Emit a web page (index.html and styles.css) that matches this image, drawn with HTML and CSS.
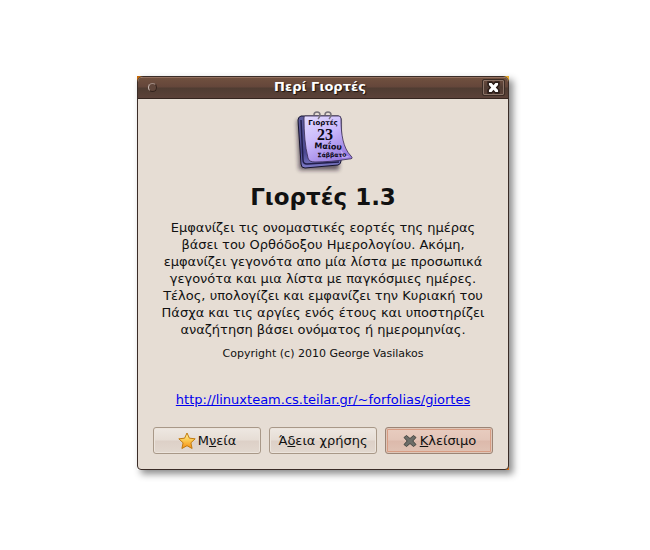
FILE: index.html
```html
<!DOCTYPE html>
<html lang="el">
<head>
<meta charset="utf-8">
<meta name="viewport" content="width=device-width, initial-scale=1">
<title>Περί Γιορτές</title>
<link rel="stylesheet" href="styles.css">
</head>
<body>
<main class="frame">
  <section class="window" role="dialog" aria-labelledby="window-title">
    <header class="titlebar">
      <button class="menu-dot" type="button" aria-label="Μενού"></button>
      <h1 class="window-title" id="window-title">Περί Γιορτές</h1>
      <button class="window-close" type="button" aria-label="Κλείσιμο παραθύρου">
        <svg width="13" height="13" viewBox="1 1 10 10" aria-hidden="true">
          <path d="M2 2h2.500L6 3.700 7.500 2H10v2L8.200 6 10 8v2H7.500L6 8.300 4.500 10H2V8l1.800-2L2 4z" fill="none" stroke="#2b1d18" stroke-width="1.500"/>
          <path d="M2.500 2.500H4.500L6 4.200 7.500 2.500H9.500v1.500L7.700 6 9.500 8v1.500H7.500L6 7.800 4.500 9.500H2.500V8l1.800-2L2.500 4z" fill="#fff"/>
        </svg>
      </button>
    </header>
    <div class="content">
      <svg class="logo" width="64" height="68" viewBox="0 0 64 68" role="img" aria-label="Ημερολόγιο">
        <defs>
          <linearGradient id="page" x1="0" y1="0" x2="0.6" y2="1">
            <stop offset="0" stop-color="#e4dcff"/>
            <stop offset="0.5" stop-color="#c9b8fb"/>
            <stop offset="1" stop-color="#9a7ee0"/>
          </linearGradient>
          <linearGradient id="block" x1="0" y1="0" x2="0" y2="1">
            <stop offset="0" stop-color="#5e5c9c"/>
            <stop offset="0.7" stop-color="#4a4790"/>
            <stop offset="1" stop-color="#7f7cc8"/>
          </linearGradient>
          <filter id="soft" x="-30%" y="-30%" width="160%" height="160%">
            <feGaussianBlur stdDeviation="2"/>
          </filter>
        </defs>
        <path d="M6 12h42v50H8z" fill="#20182c" opacity=".65" filter="url(#soft)"/>
        <path d="M7 12q0-3 3-4h37q3 0 3 3v42q0 3-3 4l-33 3q-4 0-4-4z" fill="url(#block)" stroke="#17152f"/>
        <path d="M10 12l2 40q0 4 4 4l32-2" fill="none" stroke="#211e4b" stroke-width="1.500"/>
        <path d="M14 8h34q2 0 2 3c0 15 2 29 10 37q3 3-2 3c-12 2-24 3-34 3q-6 0-7-4C14 38 13 25 13 10q0-2 1-2z" fill="url(#page)" stroke="#35284f" stroke-width=".8"/>
        <path d="M49 40q3 7 10 9-4 1-8 1z" fill="#d5c5ff" opacity=".6"/>
        <g fill="none" stroke="#77727a" stroke-width="1.500">
          <path d="M23 7q0-3 3-3 3 0 3 3 0 2-2 4"/>
          <path d="M34 7q0-3 3-3 3 0 3 3 0 2-2 4"/>
        </g>
        <g text-anchor="middle" fill="#090713" font-family="DejaVu Sans, sans-serif" font-weight="700">
          <text x="32" y="17" font-size="7">Γιορτές</text>
          <text x="34" y="32" font-size="16" font-family="Liberation Serif, serif">23</text>
          <text x="37" y="41" font-size="8" transform="rotate(3 37 41)">Μαΐου</text>
          <text x="41" y="49" font-size="6" transform="rotate(-1 41 49)">Σάββατο</text>
        </g>
      </svg>
      <h2 class="app-name">Γιορτές 1.3</h2>
      <p class="description">Εμφανίζει τις ονομαστικές εορτές της ημέρας βάσει του Ορθόδοξου Ημερολογίου. Ακόμη, εμφανίζει γεγονότα απο μία λίστα με προσωπικά γεγονότα και μια λίστα με παγκόσμιες ημέρες. Τέλος, υπολογίζει και εμφανίζει την Κυριακή του Πάσχα και τις αργίες ενός έτους και υποστηρίζει αναζήτηση βάσει ονόματος ή ημερομηνίας.</p>
      <p class="copyright">Copyright (c) 2010 George Vasilakos</p>
      <a class="website" href="http://linuxteam.cs.teilar.gr/~forfolias/giortes">http://linuxteam.cs.teilar.gr/~forfolias/giortes</a>
    </div>
    <footer class="actions">
      <button class="action" type="button">
        <svg width="18" height="18" viewBox="0 0 18 18" aria-hidden="true">
          <defs>
            <linearGradient id="gold" x1="0" y1="0" x2="0" y2="1">
              <stop offset="0" stop-color="#fff3a0"/>
              <stop offset="0.5" stop-color="#fbc64c"/>
              <stop offset="1" stop-color="#f68b10"/>
            </linearGradient>
          </defs>
          <path d="M9 1l2.400 5.200 5.800.600-4.300 4 1.200 5.700L9 13.700l-5.100 2.800 1.200-5.700-4.300-4 5.800-.6z" fill="url(#gold)" stroke="#c17b10" stroke-linejoin="round"/>
        </svg>
        <span>Μ<u>ν</u>εία</span>
      </button>
      <button class="action" type="button"><span>Ά<u>δ</u>εια χρήσης</span></button>
      <button class="action action-default" type="button">
        <svg width="16" height="14" viewBox="0 0 16 14" aria-hidden="true">
          <path d="M4.500 1.500L8 4.500l3.500-3 2.500 2L10.800 7 14 10.500l-2.500 2L8 9.500l-3.500 3-2.500-2L5.200 7 2 3.500z" fill="#6c6d68" stroke="#454642" stroke-linejoin="round"/>
        </svg>
        <span><u>Κ</u>λείσιμο</span>
      </button>
    </footer>
  </section>
</main>
</body>
</html>
```
FILE: styles.css
```css
* {
  box-sizing: border-box;
}

body {
  margin: 0;
  min-height: 100vh;
  display: grid;
  place-items: center;
  padding: 0 4px 4px 0;
  background: #fff;
  color: #111;
  font-family: "DejaVu Sans", sans-serif;
  font-size: 13px;
}

button {
  font: inherit;
  color: inherit;
  padding: 0;
}

/* The desktop shows through at the rounded corners. */
.frame {
  width: 100%;
  max-width: 372px;
  background:
    linear-gradient(#fff, #fff) left bottom / 50% 10px no-repeat,
    linear-gradient(#d8701a, #d8701a) right bottom / 50% 10px no-repeat,
    linear-gradient(90deg, #c46a0c 50%, #e6a82c 50%);
  box-shadow: 4px 4px 7px rgba(0, 0, 0, .45);
}

.window {
  border: 1px solid #3a2c27;
  border-radius: 6px 6px 4px 4px;
  background: #e6ddd4;
  overflow: hidden;
}

.titlebar {
  display: flex;
  align-items: center;
  justify-content: space-between;
  height: 22px;
  padding: 0 4px 2px 10px;
  border-top: 1px solid #93705f;
  border-bottom: 1px solid #34251f;
  background: linear-gradient(#70503f, #64463a 45%, #4f3c32 50%, #5b4138);
}

.menu-dot {
  width: 9px;
  height: 9px;
  border: 1px solid #33231d;
  border-top-color: #a08b82;
  border-left-color: #c9bab2;
  border-radius: 50%;
  background: #60463b;
}

.window-title {
  margin: 0;
  font-size: 13px;
  line-height: 18px;
  color: #fff;
  text-shadow: 1px 1px 1px #1b110d;
}

.window-close {
  display: grid;
  place-items: center;
  width: 21px;
  height: 15px;
  border: 1px solid #8b7468;
  border-radius: 1px;
  outline: 1px solid #3b2b24;
  background: linear-gradient(#67493c, #503c33 50%, #5b4138);
}

.content {
  display: flex;
  flex-direction: column;
  align-items: center;
  padding: 9px 15px 0;
  text-align: center;
}

.app-name {
  margin: 6px 0 7px;
  font-size: 23px;
  line-height: 30px;
}

.description {
  margin: 0;
  line-height: 17px;
}

.copyright {
  margin: 9px 0 31px;
  font-size: 11px;
  line-height: 14px;
}

.website {
  color: #00e;
  line-height: 16px;
}

.actions {
  display: grid;
  grid-template-columns: repeat(3, 1fr);
  gap: 8px;
  padding: 19px 15px 15px;
}

.action {
  display: flex;
  align-items: center;
  justify-content: center;
  gap: 2px;
  height: 27px;
  border: 1px solid #a89888;
  border-radius: 3px;
  background: linear-gradient(#eee8e2, #e6ddd5 48%, #ddd0c7 52%, #e2d8cf);
  box-shadow: inset 0 0 0 1px #ece4dc;
  white-space: nowrap;
}

.action-default {
  border-color: #9b8476;
  background: linear-gradient(#e8cdc0, #e3c5b8 48%, #dcb9ab 52%, #e0c3b5);
  box-shadow: inset 0 0 0 1px #dfc6b8, inset 0 0 0 2px #d79c83;
}
```
